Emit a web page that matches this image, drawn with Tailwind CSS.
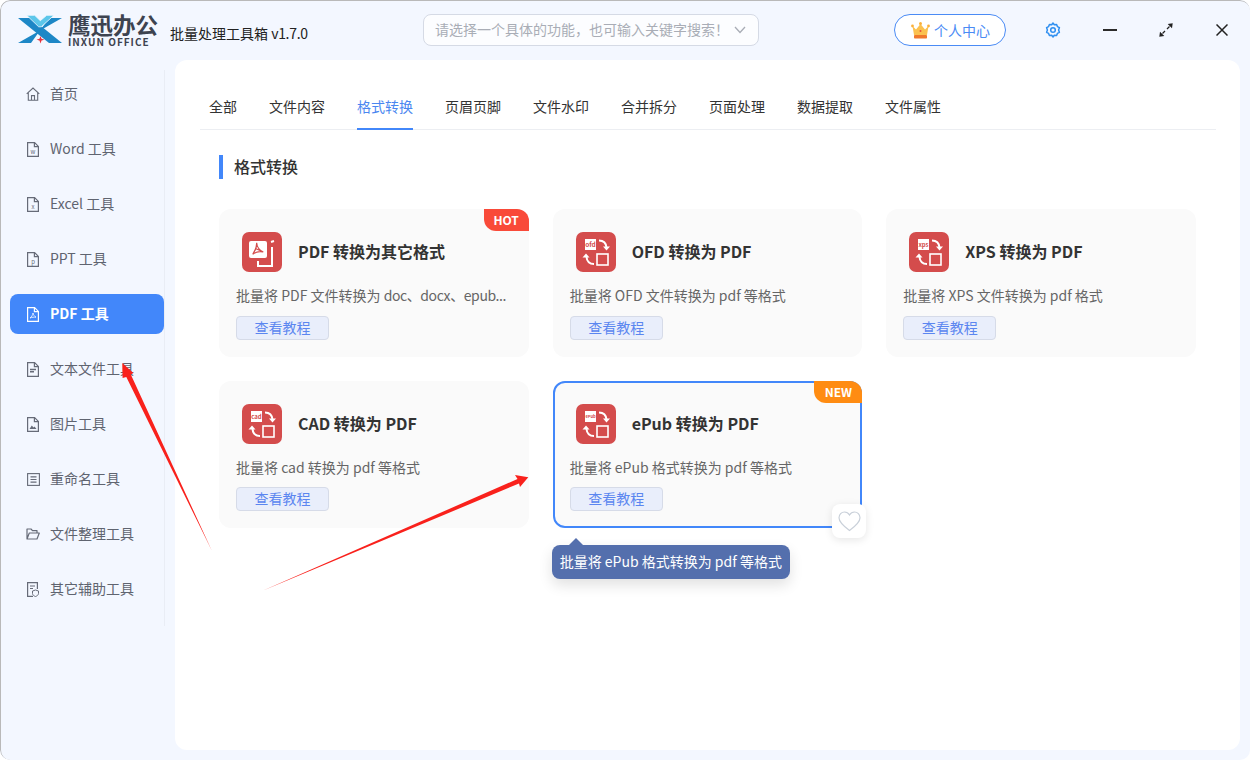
<!DOCTYPE html>
<html lang="zh-CN">
<head>
  <meta charset="UTF-8" />
  <title>批量处理工具箱</title>
  <script src="https://cdn.jsdelivr.net/npm/@tailwindcss/browser@4"></script>
</head>
<body class="bg-white font-['Noto_Sans_CJK_SC','Noto_Sans',sans-serif] overflow-hidden">

<div class="relative w-[1250px] h-[760px] bg-[#f3f7ff] rounded-[10px] overflow-hidden">

  <!-- title bar -->
  <header class="flex items-center h-[60px] pl-[18px]">
    <svg class="w-[44px] h-[32px] shrink-0" viewBox="0 0 44 32">
      <polygon points="0,4 13,4 44,29 31,29" fill="#1d87c6"/>
      <polygon points="44,4 31,4 13,29 0,29" fill="#1d87c6"/>
      <polygon points="8.700,1.300 16.700,1.300 22.300,6.700 28.700,1.300 36,1.300 23.300,12.800 20.700,12.800" fill="#5cc6ea" stroke="#f3f7ff" stroke-width=".8"/>
      <polygon points="22.500,22 23.500,24.800 26.500,25.700 23.500,26.600 22.500,29.500 21.500,26.600 18.500,25.700 21.500,24.800" fill="#e8303a"/>
    </svg>
    <div class="ml-[6px] flex flex-col w-[92px] shrink-0">
      <span class="text-[22.5px] leading-[23px] font-bold text-[#3d4350] whitespace-nowrap">鹰迅办公</span>
      <span class="text-[10px] leading-[11px] font-bold text-[#3d4350] tracking-[1px] whitespace-nowrap">INXUN OFFICE</span>
    </div>
    <span class="ml-[10px] w-[253px] text-sm text-[#222] whitespace-nowrap mt-[6px]">批量处理工具箱 <span class="tracking-[-0.3px]">v1.7.0</span></span>
    <div class="flex items-center justify-between w-[336px] h-[32px] pl-[11px] pr-[12px] bg-white/70 border border-[#d5dae5] rounded-lg">
      <span class="mb-[2px] text-sm text-[#a9adb6] whitespace-nowrap">请选择一个具体的功能，也可输入关键字搜索！</span>
      <svg class="w-[12px] h-[8px]" viewBox="0 0 12 8" fill="none" stroke="#a9adb6" stroke-width="1.3"><path d="M1 1l5 5.500L11 1"/></svg>
    </div>
    <div class="ml-[135px] flex items-center w-[112px] h-[32px] pl-[16px] bg-white border border-[#4a8bf5] rounded-full">
      <svg class="w-[19px] h-[17px]" viewBox="0 0 19 17">
        <path d="M1.500 4l3.500 3.500L9.500 2l4.500 5.500L17.500 4 16 13H3z" fill="#fbc14f"/>
        <circle cx="1.500" cy="4" r="1.400" fill="#fbb03b"/>
        <circle cx="9.500" cy="1.600" r="1.500" fill="#fbb03b"/>
        <circle cx="17.500" cy="4" r="1.400" fill="#fbb03b"/>
        <rect x="3" y="13" width="13" height="3.500" rx=".8" fill="#f0782c"/>
        <circle cx="9.500" cy="9" r="1" fill="#e8503a"/>
      </svg>
      <span class="ml-[4px] text-sm text-[#4a8bf5] whitespace-nowrap">个人中心</span>
    </div>
    <svg class="ml-[39px] w-[16px] h-[16px]" viewBox="0 0 16 16" fill="none" stroke="#2f8ff0" stroke-width="1.500" stroke-linejoin="round">
      <path d="M8 1l1.300 1.800 2.300-.3.800 2.100 2 1.100-.8 2.300.8 2.300-2 1.100-.8 2.100-2.300-.3L8 15l-1.300-1.800-2.300.3-.8-2.100-2-1.100.8-2.300-.8-2.300 2-1.100.8-2.100 2.300.3z"/>
      <circle cx="8" cy="8" r="2.300"/>
    </svg>
    <div class="ml-[42px] w-[14px] h-[2px] bg-[#2b2b2b]"></div>
    <svg class="ml-[42px] w-[14px] h-[14px]" viewBox="0 0 14 14" fill="#222">
      <path d="M13.700.3L8.700 1l4.300 4.300zM.3 13.700l5-.7L1 8.700z"/>
      <path d="M10.500 3.500L8 6M3.500 10.500L6 8" stroke="#222" stroke-width="1.300"/>
    </svg>
    <svg class="ml-[43px] w-[12px] h-[12px]" viewBox="0 0 12 12" stroke="#222" stroke-width="1.500"><path d="M.5.5l11 11M11.500.5l-11 11"/></svg>
  </header>

  <div class="flex">
    <!-- sidebar -->
    <nav class="w-[165px] h-[556px] mt-[10px] pt-[4px] pl-[10px] border-r border-[#e9edf5] flex flex-col gap-[15px] shrink-0">
      <a class="flex items-center w-[154px] h-10 rounded-lg pl-[16px] text-sm text-[#5f6470]">
        <svg class="w-[14px] h-[14px] mr-[10px]" viewBox="0 0 14 14" fill="none" stroke="#666b78" stroke-width="1.100"><path d="M.7 6.800L7 1l6.300 5.800M2.300 5.600v7.600h9.400V5.600M5.500 13V8.600h3V13"/></svg><span class="mb-[2px]">首页</span>
      </a>
      <a class="flex items-center w-[154px] h-10 rounded-lg pl-[16px] text-sm text-[#5f6470]">
        <svg class="w-[12px] h-[15px] mr-[11px] ml-[1px]" viewBox="0 0 12 15" fill="none" stroke="#666b78" stroke-width="1.200"><path d="M.6.6h7l3.800 3.800v10H.6zM7.400.6v4h4"/><text x="6" y="11.500" font-size="6" text-anchor="middle" fill="#666b78" stroke="none">w</text></svg><span class="mb-[2px]">Word 工具</span>
      </a>
      <a class="flex items-center w-[154px] h-10 rounded-lg pl-[16px] text-sm text-[#5f6470]">
        <svg class="w-[12px] h-[15px] mr-[11px] ml-[1px]" viewBox="0 0 12 15" fill="none" stroke="#666b78" stroke-width="1.200"><path d="M.6.6h7l3.800 3.800v10H.6zM7.400.6v4h4"/><text x="6" y="11.500" font-size="6" text-anchor="middle" fill="#666b78" stroke="none">x</text></svg><span class="mb-[2px]">Excel 工具</span>
      </a>
      <a class="flex items-center w-[154px] h-10 rounded-lg pl-[16px] text-sm text-[#5f6470]">
        <svg class="w-[12px] h-[15px] mr-[11px] ml-[1px]" viewBox="0 0 12 15" fill="none" stroke="#666b78" stroke-width="1.200"><path d="M.6.6h7l3.800 3.800v10H.6zM7.400.6v4h4"/><text x="6" y="11.500" font-size="6" text-anchor="middle" fill="#666b78" stroke="none">p</text></svg><span class="mb-[2px]">PPT 工具</span>
      </a>
      <a class="flex items-center w-[154px] h-10 rounded-lg pl-[16px] text-sm font-bold text-white bg-[#4287fa]">
        <svg class="w-[12px] h-[15px] mr-[11px] ml-[1px]" viewBox="0 0 12 15" fill="none" stroke="#fff" stroke-width="1.200"><path d="M.6.6h7l3.800 3.800v10H.6zM7.400.6v4h4"/><path d="M6 6c-.3 2-1.200 3.600-3 5 2-.8 4-1 6-.8-1.600-1-2.600-2.300-3-4.200z" stroke-width=".8"/></svg><span class="mb-[2px]">PDF 工具</span>
      </a>
      <a class="flex items-center w-[154px] h-10 rounded-lg pl-[16px] text-sm text-[#5f6470]">
        <svg class="w-[12px] h-[15px] mr-[11px] ml-[1px]" viewBox="0 0 12 15" fill="none" stroke="#666b78" stroke-width="1.200"><path d="M.6.6h7l3.800 3.800v10H.6zM7.400.6v4h4"/><path d="M3 7.500h6M3 9.800h4" stroke-width="1.400"/></svg><span class="mb-[2px]">文本文件工具</span>
      </a>
      <a class="flex items-center w-[154px] h-10 rounded-lg pl-[16px] text-sm text-[#5f6470]">
        <svg class="w-[12px] h-[15px] mr-[11px] ml-[1px]" viewBox="0 0 12 15" fill="none" stroke="#666b78" stroke-width="1.200"><path d="M.6.6h7l3.800 3.800v10H.6zM7.400.6v4h4"/><path d="M2.500 12l2.300-3.500 1.700 2 1-1 2 2.500z" fill="#666b78" stroke="none"/></svg><span class="mb-[2px]">图片工具</span>
      </a>
      <a class="flex items-center w-[154px] h-10 rounded-lg pl-[16px] text-sm text-[#5f6470]">
        <svg class="w-[13px] h-[13px] mr-[10px] ml-[1px]" viewBox="0 0 13 13" fill="none" stroke="#666b78" stroke-width="1.100"><rect x=".6" y=".6" width="11.800" height="11.800"/><path d="M3.500 3.800h6M3.500 6.500h6M3.500 9.200h6" stroke-width="1.200"/></svg><span class="mb-[2px]">重命名工具</span>
      </a>
      <a class="flex items-center w-[154px] h-10 rounded-lg pl-[16px] text-sm text-[#5f6470]">
        <svg class="w-[14px] h-[12px] mr-[10px]" viewBox="0 0 14 12" fill="none" stroke="#666b78" stroke-width="1.200" stroke-linejoin="round"><path d="M1 11V1h4l1.500 1.700H11V5M1 11l2.300-6h10L11 11z"/></svg><span class="mb-[2px]">文件整理工具</span>
      </a>
      <a class="flex items-center w-[154px] h-10 rounded-lg pl-[16px] text-sm text-[#5f6470]">
        <svg class="w-[12px] h-[15px] mr-[11px] ml-[1px]" viewBox="0 0 12 15" fill="none" stroke="#666b78" stroke-width="1.200"><path d="M6 14.400H.6V.6h9.800v6.500"/><path d="M3 4h5M3 6.500h3"/><path d="M8.500 8l3 1v2.500c0 1.400-1.500 2.500-3 3-1.500-.5-3-1.600-3-3V9z" stroke-width="1"/></svg><span class="mb-[2px]">其它辅助工具</span>
      </a>
    </nav>

    <!-- main panel -->
    <main class="ml-[10px] w-[1065px] h-[690px] bg-white rounded-xl pt-[25px] pl-[25px] shrink-0">
      <div class="flex gap-8 w-[1016px] h-[45px] pl-[9px] border-b border-[#eceef2] text-sm text-[#333]">
        <span class="leading-[42px]">全部</span>
        <span class="leading-[42px]">文件内容</span>
        <span class="leading-[42px] h-[45px] text-[#4a86f0] border-b-2 border-[#4287fa]">格式转换</span>
        <span class="leading-[42px]">页眉页脚</span>
        <span class="leading-[42px]">文件水印</span>
        <span class="leading-[42px]">合并拆分</span>
        <span class="leading-[42px]">页面处理</span>
        <span class="leading-[42px]">数据提取</span>
        <span class="leading-[42px]">文件属性</span>
      </div>

      <div class="mt-[25px] ml-[19px] h-[24px] flex items-center border-l-4 border-[#4287fa] pl-[11px] text-base font-medium text-[#333]"><span class="mb-[2px]">格式转换</span></div>

      <div class="mt-[30px] ml-[19px] w-[977px] grid grid-cols-3 gap-6">
        <!-- card -->
        <div class="relative h-[148px] bg-[#fafafa] rounded-xl border-2 border-transparent">
          <span class="absolute -top-[2px] -right-[2px] w-[45px] h-[22px] bg-[#f94a39] rounded-tr-xl rounded-bl-xl text-xs font-bold leading-[22px] text-center text-white">HOT</span>
          <div class="flex items-center pl-[21px] pt-[21px]">
            <svg class="w-10 h-10 shrink-0" viewBox="0 0 40 40">
              <rect width="40" height="40" rx="7" fill="#d44c4c"/>
              <rect x="7" y="9" width="18" height="17" rx="2" fill="#fff"/>
              <path d="M14.700 10.700L14 16.700 10.700 22.300M14 16.700l7.300 3.300M14.700 10.700C15 15 17 18 21.300 20 17 19 13.500 20 10.700 22.300 13 19 14.500 15 14.700 10.700z" fill="none" stroke="#d44c4c" stroke-width="1.100"/>
              <path d="M29 10l3-1M30 15v19H16v-5" fill="none" stroke="#fff" stroke-width="2"/>
            </svg>
            <span class="ml-4 mb-[2px] text-base font-bold text-[#333] whitespace-nowrap">PDF 转换为其它格式</span>
          </div>
          <p class="pl-[15px] mt-[12px] text-sm leading-[22px] text-[#666] whitespace-nowrap">批量将 PDF 文件转换为 <span class="tracking-[-0.4px]">doc、docx、epub...</span></p>
          <button class="block ml-[15px] mt-[10px] w-[93px] h-[24px] pb-[2px] bg-[#e9eefb] border border-[#d6dbe8] rounded text-sm text-[#5b86f0]">查看教程</button>
        </div>
        <!-- card -->
        <div class="relative h-[148px] bg-[#fafafa] rounded-xl border-2 border-transparent">
          <div class="flex items-center pl-[21px] pt-[21px]">
            <svg class="w-10 h-10 shrink-0" viewBox="0 0 40 40">
              <rect width="40" height="40" rx="7" fill="#d44c4c"/>
              <rect x="9" y="7" width="11" height="11" fill="#fff"/>
              <text x="14.500" y="15" font-size="6.500" font-weight="700" text-anchor="middle" fill="#d44c4c">ofd</text>
              <path d="M23 8.500c4 0 7 2 7.500 7" fill="none" stroke="#fff" stroke-width="2"/>
              <path d="M27 14.500h7l-3.500 4z" fill="#fff"/>
              <path d="M18 32c-4 0-7-2-7.500-7" fill="none" stroke="#fff" stroke-width="2"/>
              <path d="M6.500 25.500h7l-3.500-4z" fill="#fff"/>
              <rect x="21" y="22" width="11" height="11" fill="none" stroke="#fff" stroke-width="1.600"/>
            </svg>
            <span class="ml-4 mb-[2px] text-base font-bold text-[#333] whitespace-nowrap">OFD 转换为 PDF</span>
          </div>
          <p class="pl-[15px] mt-[12px] text-sm leading-[22px] text-[#666] whitespace-nowrap">批量将 OFD 文件转换为 pdf 等格式</p>
          <button class="block ml-[15px] mt-[10px] w-[93px] h-[24px] pb-[2px] bg-[#e9eefb] border border-[#d6dbe8] rounded text-sm text-[#5b86f0]">查看教程</button>
        </div>
        <!-- card -->
        <div class="relative h-[148px] bg-[#fafafa] rounded-xl border-2 border-transparent">
          <div class="flex items-center pl-[21px] pt-[21px]">
            <svg class="w-10 h-10 shrink-0" viewBox="0 0 40 40">
              <rect width="40" height="40" rx="7" fill="#d44c4c"/>
              <rect x="9" y="7" width="11" height="11" fill="#fff"/>
              <text x="14.500" y="15" font-size="6" font-weight="700" text-anchor="middle" fill="#d44c4c">xps</text>
              <path d="M23 8.500c4 0 7 2 7.500 7" fill="none" stroke="#fff" stroke-width="2"/>
              <path d="M27 14.500h7l-3.500 4z" fill="#fff"/>
              <path d="M18 32c-4 0-7-2-7.500-7" fill="none" stroke="#fff" stroke-width="2"/>
              <path d="M6.500 25.500h7l-3.500-4z" fill="#fff"/>
              <rect x="21" y="22" width="11" height="11" fill="none" stroke="#fff" stroke-width="1.600"/>
            </svg>
            <span class="ml-4 mb-[2px] text-base font-bold text-[#333] whitespace-nowrap">XPS 转换为 PDF</span>
          </div>
          <p class="pl-[15px] mt-[12px] text-sm leading-[22px] text-[#666] whitespace-nowrap">批量将 XPS 文件转换为 pdf 格式</p>
          <button class="block ml-[15px] mt-[10px] w-[93px] h-[24px] pb-[2px] bg-[#e9eefb] border border-[#d6dbe8] rounded text-sm text-[#5b86f0]">查看教程</button>
        </div>
        <!-- card -->
        <div class="relative h-[147px] bg-[#fafafa] rounded-xl border-2 border-transparent">
          <div class="flex items-center pl-[21px] pt-[21px]">
            <svg class="w-10 h-10 shrink-0" viewBox="0 0 40 40">
              <rect width="40" height="40" rx="7" fill="#d44c4c"/>
              <rect x="9" y="7" width="11" height="11" fill="#fff"/>
              <text x="14.500" y="15" font-size="6" font-weight="700" text-anchor="middle" fill="#d44c4c">cad</text>
              <path d="M23 8.500c4 0 7 2 7.500 7" fill="none" stroke="#fff" stroke-width="2"/>
              <path d="M27 14.500h7l-3.500 4z" fill="#fff"/>
              <path d="M18 32c-4 0-7-2-7.500-7" fill="none" stroke="#fff" stroke-width="2"/>
              <path d="M6.500 25.500h7l-3.500-4z" fill="#fff"/>
              <rect x="21" y="22" width="11" height="11" fill="none" stroke="#fff" stroke-width="1.600"/>
            </svg>
            <span class="ml-4 mb-[2px] text-base font-bold text-[#333] whitespace-nowrap">CAD 转换为 PDF</span>
          </div>
          <p class="pl-[15px] mt-[12px] text-sm leading-[22px] text-[#666] whitespace-nowrap">批量将 cad 转换为 pdf 等格式</p>
          <button class="block ml-[15px] mt-[9px] w-[93px] h-[24px] pb-[2px] bg-[#e9eefb] border border-[#d6dbe8] rounded text-sm text-[#5b86f0]">查看教程</button>
        </div>
        <!-- selected card -->
        <div class="relative h-[147px] bg-[#fafafa] rounded-xl border-2 border-[#4287fa]">
          <span class="absolute -top-[2px] -right-[2px] w-[48px] h-[22px] bg-[#ff8c12] rounded-tr-xl rounded-bl-xl text-xs font-bold leading-[22px] text-center text-white">NEW</span>
          <div class="flex items-center pl-[21px] pt-[21px]">
            <svg class="w-10 h-10 shrink-0" viewBox="0 0 40 40">
              <rect width="40" height="40" rx="7" fill="#d44c4c"/>
              <rect x="9" y="7" width="11" height="11" fill="#fff"/>
              <text x="14.500" y="14" font-size="4" font-weight="700" text-anchor="middle" fill="#d44c4c">ePub</text>
              <path d="M23 8.500c4 0 7 2 7.500 7" fill="none" stroke="#fff" stroke-width="2"/>
              <path d="M27 14.500h7l-3.500 4z" fill="#fff"/>
              <path d="M18 32c-4 0-7-2-7.500-7" fill="none" stroke="#fff" stroke-width="2"/>
              <path d="M6.500 25.500h7l-3.500-4z" fill="#fff"/>
              <rect x="21" y="22" width="11" height="11" fill="none" stroke="#fff" stroke-width="1.600"/>
            </svg>
            <span class="ml-4 mb-[2px] text-base font-bold text-[#333] whitespace-nowrap">ePub 转换为 PDF</span>
          </div>
          <p class="pl-[15px] mt-[12px] text-sm leading-[22px] text-[#666] whitespace-nowrap">批量将 ePub 格式转换为 pdf 等格式</p>
          <button class="block ml-[15px] mt-[9px] w-[93px] h-[24px] pb-[2px] bg-[#e9eefb] border border-[#d6dbe8] rounded text-sm text-[#5b86f0]">查看教程</button>
          <!-- favourite -->
          <div class="absolute -right-[6px] -bottom-[12px] w-[34px] h-[34px] flex items-center justify-center bg-white rounded-lg shadow-[0_2px_8px_rgba(0,0,0,0.1)]">
            <svg class="w-[23px] h-[21px]" viewBox="0 0 23 21" fill="none" stroke="#c9d0d9" stroke-width="1.200"><path d="M11.500 19.500C6 15.500 1 11.500 1 6.800 1 3.500 3.500 1 6.500 1c2 0 3.800 1 5 3 1.200-2 3-3 5-3 3 0 5.500 2.500 5.500 5.800 0 4.700-5 8.700-10.500 12.700z"/></svg>
          </div>
          <!-- tooltip -->
          <div class="absolute -left-[3px] top-[162px] h-[34px] px-[8px] flex items-center bg-[#546fad] rounded-lg text-sm text-white whitespace-nowrap shadow-[0_6px_14px_rgba(0,0,0,0.12)]">
            <span class="absolute left-[17px] -top-[7px] w-0 h-0 border-x-[7px] border-x-transparent border-b-[7px] border-b-[#546fad]"></span>
            <span class="mb-[2px]">批量将 ePub 格式转换为 pdf 等格式</span>
          </div>
        </div>
      </div>
    </main>
  </div>

  <!-- red annotation arrows -->
  <svg class="absolute left-0 top-0 pointer-events-none" width="1250" height="760" viewBox="0 0 1250 760">
    <polygon points="122.300,363 133.400,373 130.800,374.500 212,551 126.300,377 122.600,378" fill="#f9211c"/>
    <polygon points="528.300,477.300 515,475 517.500,479 262,591 519,483.500 520,487" fill="#f9211c"/>
  </svg>

  <!-- window frame -->
  <div class="absolute inset-0 rounded-[10px] border-t border-l border-[#b9b9b9] pointer-events-none"></div>
</div>

</body>
</html>
